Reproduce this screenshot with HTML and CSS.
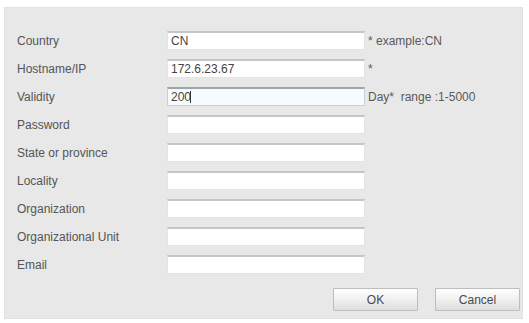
FILE: index.html
```html
<!DOCTYPE html>
<html lang="en">
<head>
    <meta charset="UTF-8">
    <meta name="viewport" content="width=device-width, initial-scale=1.0">
    <title>Create Certificate</title>
    <link rel="stylesheet" href="styles.css">
</head>
<body>

<div class="dialog">
    <!-- Certificate fields -->
    <div class="form">
        <div class="row">
            <label for="country">Country</label>
            <input type="text" id="country" value="CN">
            <span class="hint">* example:CN</span>
        </div>
        <div class="row">
            <label for="host">Hostname/IP</label>
            <input type="text" id="host" value="172.6.23.67">
            <span class="hint">*</span>
        </div>
        <div class="row">
            <label for="validity">Validity</label>
            <div class="field active">
                <input type="text" id="validity" value="200">
                <span class="caret"></span>
            </div>
            <span class="hint">Day* &nbsp;range :1-5000</span>
        </div>
        <div class="row">
            <label for="password">Password</label>
            <input type="password" id="password">
        </div>
        <div class="row">
            <label for="state">State or province</label>
            <input type="text" id="state">
        </div>
        <div class="row">
            <label for="locality">Locality</label>
            <input type="text" id="locality">
        </div>
        <div class="row">
            <label for="org">Organization</label>
            <input type="text" id="org">
        </div>
        <div class="row">
            <label for="unit">Organizational Unit</label>
            <input type="text" id="unit">
        </div>
        <div class="row">
            <label for="email">Email</label>
            <input type="text" id="email">
        </div>
    </div>

    <!-- Buttons -->
    <div class="actions">
        <button>OK</button>
        <button>Cancel</button>
    </div>
</div>

</body>
</html>
```

FILE: styles.css
```css
* {
    margin: 0;
    padding: 0;
    box-sizing: border-box;
    font-family: 'Liberation Sans', Arial, sans-serif;
}

body {
    background: #ffffff;
    padding: 7px 6px 4px 4px;
}

.dialog {
    width: 519px;
    height: 312px;
    background: #e8e8e8;
    border: 1px solid #e2e2e2;
    padding: 23px 2px 7px 12px;
    display: flex;
    flex-direction: column;
}

.form {
    display: flex;
    flex-direction: column;
    gap: 9px;
}

.row {
    display: flex;
    align-items: center;
    height: 19px;
}

label {
    width: 150px;
    font-size: 12px;
    color: #555;
}

input,
.field {
    width: 198px;
    height: 19px;
    border: 1px solid #e4e4e4;
    border-top: 2px solid #c6c6c6;
    background: #ffffff;
    font-size: 12px;
    color: #444;
    padding: 0 3px;
    outline: none;
}

.field {
    display: flex;
    align-items: center;
    padding: 0;
}

.field input {
    flex: none;
    width: 22px;
    min-width: 0;
    height: 100%;
    border: none;
    background: transparent;
    padding: 0 0 0 3px;
}

.caret {
    width: 1px;
    height: 12px;
    background: #333;
}

.field.active {
    border: 1px solid #c8d0d8;
    border-top: 2px solid #9ca4ac;
    background: #f8fbfd;
}

.hint {
    margin-left: 3px;
    font-size: 12px;
    color: #5a5a5a;
}

.actions {
    margin-top: auto;
    display: flex;
    justify-content: flex-end;
    gap: 17px;
}

button {
    width: 85px;
    height: 23px;
    border: 1px solid #bdbdbd;
    border-radius: 1px;
    background: linear-gradient(to bottom, #fefefe, #f0f0f0 50%, #dedede);
    font-size: 12px;
    color: #4a4a4a;
    cursor: pointer;
}
```
